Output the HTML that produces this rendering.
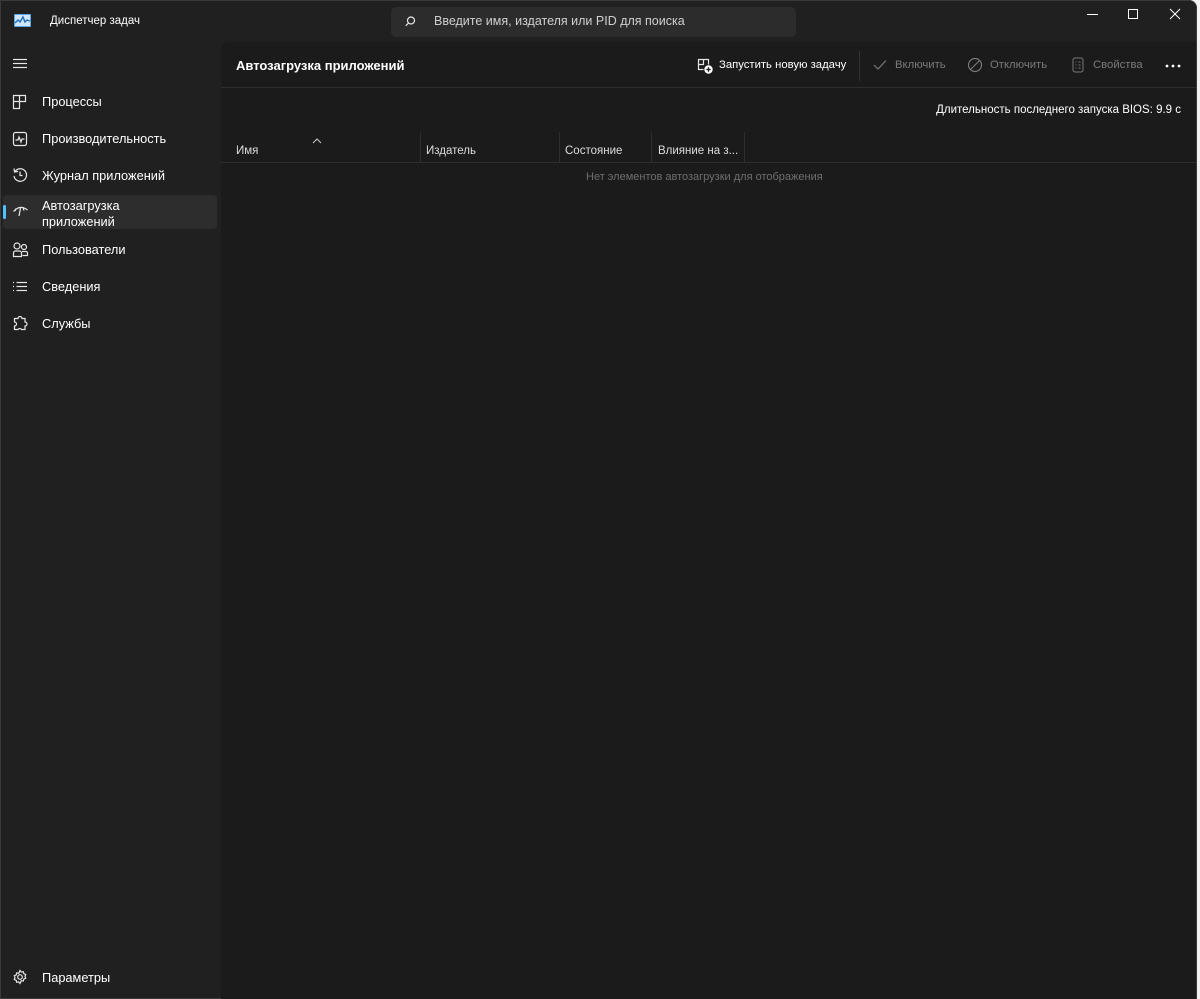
<!DOCTYPE html>
<html><head><meta charset="utf-8"><style>
*{margin:0;padding:0;box-sizing:border-box}
body{width:1200px;height:999px;background:#f3f3f3;font-family:"Segoe UI","Liberation Sans","DejaVu Sans",sans-serif;overflow:hidden;position:relative}
#win{position:absolute;left:0;top:0;width:1197px;height:999px;background:#202020;box-shadow:inset 0 0 0 1px #3a3a3a;border-radius:0 8px 0 0;overflow:hidden}
.t{position:absolute;white-space:nowrap;color:#fff}
svg{position:absolute}
#main{position:absolute;left:221px;top:42px;right:1px;bottom:0;background:#1b1b1b;border-radius:8px 0 0 0}
.nav{font-size:12.8px;color:#fff;position:absolute;left:42px}
.ic{stroke:#e6e6e6;fill:none;stroke-width:1.2}
</style></head><body>
<div id="win">
<svg style="left:14px;top:14px" width="17" height="13"><rect x="0" y="0" width="17" height="13" rx="1" fill="#5aa8e8"/><rect x="1" y="1" width="15" height="11" fill="#cfe6f8"/><polyline points="1,9 4,6 6,8 9,3 11,8 13,6 16,7" stroke="#1f6fc0" stroke-width="1.4" fill="none"/></svg>
<div class="t" style="left:50px;top:15px;font-size:11.5px">Диспетчер задач</div>
<div style="position:absolute;left:391px;top:7px;width:405px;height:30px;background:#2c2c2c;border-radius:5px"></div>
<svg style="left:405px;top:16px" width="11" height="11"><circle cx="6" cy="4.5" r="3.5" class="ic" stroke-width="1.1"/><line x1="3.5" y1="7" x2="0.8" y2="9.8" class="ic" stroke-width="1.2"/></svg>
<div class="t" style="left:434px;top:14px;font-size:12.5px;color:#cfcfcf">Введите имя, издателя или PID для поиска</div>
<svg style="left:1087px;top:8px" width="100" height="14"><line x1="0" y1="6.5" x2="11" y2="6.5" stroke="#fff"/><rect x="41.5" y="1.5" width="9" height="9" stroke="#fff" fill="none"/><line x1="83" y1="1" x2="93" y2="11" stroke="#fff"/><line x1="93" y1="1" x2="83" y2="11" stroke="#fff"/></svg>

<svg style="left:12px;top:57px" width="16" height="14"><line x1="1" y1="2.5" x2="15" y2="2.5" class="ic"/><line x1="1" y1="6.5" x2="15" y2="6.5" class="ic"/><line x1="1" y1="10.5" x2="15" y2="10.5" class="ic"/></svg>

<svg style="left:12px;top:94px" width="16" height="16"><path d="M1.5 1.5h6v13h-6zM7.5 1.5h6v6h-6zM1.5 7.5h6" class="ic"/></svg>
<div class="nav" style="top:94px">Процессы</div>

<svg style="left:12px;top:131px" width="16" height="16"><rect x="1.5" y="1.5" width="13" height="13" rx="2" class="ic"/><polyline points="3.5,9 6,9 7,6 9,11 10,8 12.5,8" class="ic"/></svg>
<div class="nav" style="top:131px">Производительность</div>

<svg style="left:12px;top:167px" width="16" height="16"><path d="M3 4.5A6.3 6.3 0 1 1 2 9" class="ic"/><polyline points="2,1.5 2.5,5 6,4.5" class="ic"/><polyline points="8,4.5 8,8.5 10.5,8.5" class="ic"/></svg>
<div class="nav" style="top:168px">Журнал приложений</div>

<div style="position:absolute;left:3px;top:195px;width:214px;height:34px;background:#2d2d2d;border-radius:4px"></div>
<div style="position:absolute;left:3px;top:205px;width:3px;height:14px;background:#4cc2ff;border-radius:2px"></div>
<svg style="left:12px;top:204px" width="17" height="14"><path d="M1.5 7.5Q8 0 15.5 6" class="ic" stroke-width="1.5"/><path d="M8.5 4l-1.5 8" class="ic" stroke-width="1.5"/><path d="M11 3.5l1 3" class="ic"/><path d="M4 4.5l-1 2.5" class="ic"/></svg>
<div class="nav" style="top:198px;line-height:16px">Автозагрузка<br>приложений</div>

<svg style="left:12px;top:242px" width="17" height="16"><circle cx="5" cy="4" r="3" class="ic"/><circle cx="12" cy="5" r="2.5" class="ic"/><path d="M1.5 14.5v-3.5a2 2 0 0 1 2-2h4a2 2 0 0 1 2 2v3.5zM10 9.5h4a1.5 1.5 0 0 1 1.5 1.5v2.5h-5" class="ic"/></svg>
<div class="nav" style="top:242px">Пользователи</div>

<svg style="left:12px;top:280px" width="16" height="14"><g class="ic"><line x1="1" y1="2.5" x2="2" y2="2.5"/><line x1="1" y1="6.5" x2="2" y2="6.5"/><line x1="1" y1="10.5" x2="2" y2="10.5"/><line x1="4.5" y1="2.5" x2="15" y2="2.5"/><line x1="4.5" y1="6.5" x2="15" y2="6.5"/><line x1="4.5" y1="10.5" x2="15" y2="10.5"/></g></svg>
<div class="nav" style="top:279px">Сведения</div>

<svg style="left:12px;top:316px" width="16" height="16"><path d="M6 2.5a2 2 0 0 1 4 0h3v3.5a2 2 0 0 1 0 4v3.5h-3.5a2 2 0 0 0-3.5 0H2.5v-3.5a2 2 0 0 0 0-4V2.5z" class="ic"/></svg>
<div class="nav" style="top:316px">Службы</div>

<svg style="left:12px;top:969px" width="16" height="16"><circle cx="8" cy="8" r="2.3" class="ic"/><path d="M8 1.5l1.3 1.6 2-.4.5 2 1.9.8-.7 1.9.7 1.9-1.9.8-.5 2-2-.4L8 14.5l-1.3-1.6-2 .4-.5-2-1.9-.8.7-1.9-.7-1.9 1.9-.8.5-2 2 .4z" class="ic"/></svg>
<div class="nav" style="top:970px">Параметры</div>

<div id="main">
 <div class="t" style="left:15px;top:16px;font-size:13px;font-weight:bold">Автозагрузка приложений</div>
 <svg style="left:476px;top:16px" width="16" height="16"><path d="M1.5 1.5h5v5h-5zM6.5 1.5h5v5M1.5 6.5v5h5" class="ic"/><circle cx="11.5" cy="11.5" r="4.2" fill="#fff"/><path d="M11.5 9.3v4.4M9.3 11.5h4.4" stroke="#1b1b1b" stroke-width="1.3"/></svg>
 <div class="t" style="left:498px;top:17px;font-size:11.3px">Запустить новую задачу</div>
 <div style="position:absolute;left:638px;top:9px;width:1px;height:30px;background:#333"></div>
 <svg style="left:652px;top:17px" width="14" height="12"><polyline points="1,6 5,10 13,1.5" stroke="#777" fill="none" stroke-width="1.2"/></svg>
 <div class="t" style="left:674px;top:17px;font-size:11.3px;color:#7a7a7a">Включить</div>
 <svg style="left:746px;top:15px" width="16" height="16"><circle cx="8" cy="8" r="6.5" stroke="#777" fill="none" stroke-width="1.2"/><line x1="3.5" y1="12.5" x2="12.5" y2="3.5" stroke="#777" stroke-width="1.2"/></svg>
 <div class="t" style="left:769px;top:17px;font-size:11.3px;color:#7a7a7a">Отключить</div>
 <svg style="left:851px;top:15px" width="12" height="16"><rect x="1" y="1" width="10" height="14" rx="2" stroke="#777" fill="none"/><path d="M3.5 5h1M6.5 5h2M3.5 8h1M6.5 8h2M3.5 11h1M6.5 11h2" stroke="#777"/></svg>
 <div class="t" style="left:872px;top:17px;font-size:11.3px;color:#7a7a7a">Свойства</div>
 <svg style="left:944px;top:22px" width="16" height="4"><circle cx="2" cy="2" r="1.4" fill="#fff"/><circle cx="8" cy="2" r="1.4" fill="#fff"/><circle cx="14" cy="2" r="1.4" fill="#fff"/></svg>
 <div style="position:absolute;left:0;right:0;top:45px;height:1px;background:#2e2e2e"></div>
 <div class="t" style="right:15px;top:62px;font-size:11.5px">Длительность последнего запуска BIOS: 9.9 с</div>
 <svg style="left:91px;top:96px" width="10" height="6"><polyline points="1,5 5,1 9,5" stroke="#ccc" fill="none"/></svg>
 <div class="t" style="left:15px;top:103px;font-size:11.5px;color:#ddd">Имя</div>
 <div style="position:absolute;left:199px;top:90px;width:1px;height:30px;background:#2e2e2e"></div>
 <div class="t" style="left:205px;top:103px;font-size:11.5px;color:#ddd">Издатель</div>
 <div style="position:absolute;left:338px;top:90px;width:1px;height:30px;background:#2e2e2e"></div>
 <div class="t" style="left:344px;top:103px;font-size:11.5px;color:#ddd">Состояние</div>
 <div style="position:absolute;left:430px;top:90px;width:1px;height:30px;background:#2e2e2e"></div>
 <div class="t" style="left:437px;top:103px;font-size:11.5px;color:#ddd">Влияние на з...</div>
 <div style="position:absolute;left:523px;top:90px;width:1px;height:30px;background:#2e2e2e"></div>
 <div style="position:absolute;left:0;right:0;top:120px;height:1px;background:#2e2e2e"></div>
 <div class="t" style="left:365px;top:129px;font-size:11px;color:#6e6e6e">Нет элементов автозагрузки для отображения</div>
</div>
</div>
</body></html>
